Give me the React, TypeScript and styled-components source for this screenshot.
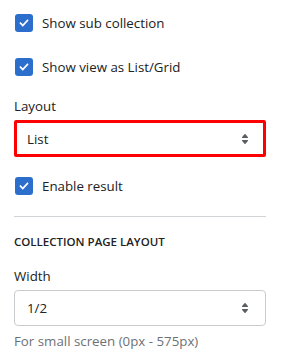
import React from 'react';
import styled, { createGlobalStyle } from 'styled-components';

const Global = createGlobalStyle`
  body {
    margin: 0;
    background: #ffffff;
    font-family: 'Open Sans', 'Noto Sans', sans-serif;
    color: #202223;
  }
`;

const Panel = styled.div`
  width: 252px;
  padding: 14px 0 0 14px;
  display: flex;
  flex-direction: column;
`;

const CheckRow = styled.label<{ top: number }>`
  display: flex;
  align-items: center;
  gap: 9px;
  height: 18px;
  margin-top: ${p => p.top}px;
  padding-left: 1px;
  font-size: 13.3px;
  line-height: 18px;
`;

const Box = styled.span`
  width: 18px;
  height: 18px;
  border-radius: 3px;
  background-color: #2c6ecb;
  display: flex;
  align-items: center;
  justify-content: center;
  flex-shrink: 0;
`;

const Label = styled.div<{ top: number }>`
  margin-top: ${p => p.top}px;
  font-size: 13.3px;
  line-height: 20px;
`;

const SelectBox = styled.div<{ highlighted?: boolean }>`
  margin-top: 4px;
  box-sizing: border-box;
  height: ${p => (p.highlighted ? 37 : 36)}px;
  border: ${p => (p.highlighted ? '3px solid #ff0000' : '1px solid #c9cccf')};
  border-radius: ${p => (p.highlighted ? 2 : 4)}px;
  display: flex;
  align-items: center;
  justify-content: space-between;
  padding: 0 ${p => (p.highlighted ? 8 : 10)}px 0 ${p => (p.highlighted ? 10 : 12)}px;
  font-size: 13.3px;
`;

const Divider = styled.div`
  margin-top: 21px;
  height: 1px;
  background-color: #d2d5d8;
`;

const Heading = styled.div`
  margin-top: 17px;
  font-size: 11.5px;
  line-height: 16px;
  font-weight: 600;
  text-transform: uppercase;
`;

const Help = styled.div`
  margin-top: 5px;
  font-size: 13.3px;
  line-height: 20px;
  color: #6d7175;
`;

function Tick() {
  return (
    <svg width="18" height="18" viewBox="0 0 20 20" fill="#ffffff">
      <path d="m8.315 13.859-3.182-3.417a.506.506 0 0 1 0-.684l.643-.684a.437.437 0 0 1 .642 0l2.22 2.393 4.942-5.327a.437.437 0 0 1 .643 0l.643.684a.504.504 0 0 1 0 .683l-5.91 6.35a.437.437 0 0 1-.642 0" />
    </svg>
  );
}

function Arrows() {
  return (
    <svg width="20" height="20" viewBox="0 0 20 20" fill="#5c5f62">
      <path d="M7.676 9h4.648c.563 0 .879-.603.53-1.014l-2.323-2.746a.708.708 0 0 0-1.062 0l-2.324 2.746c-.347.411-.032 1.014.531 1.014Zm4.648 2h-4.648c-.563 0-.878.603-.53 1.014l2.323 2.746c.27.32.792.32 1.062 0l2.323-2.746c.349-.411.033-1.014-.53-1.014Z" />
    </svg>
  );
}

function Check(props: { label: string; top: number }) {
  return (
    <CheckRow top={props.top}>
      <Box>
        <Tick />
      </Box>
      {props.label}
    </CheckRow>
  );
}

function Select(props: { value: string; highlighted?: boolean }) {
  return (
    <SelectBox highlighted={props.highlighted}>
      <span>{props.value}</span>
      <Arrows />
    </SelectBox>
  );
}

export default function App() {
  return (
    <>
      <Global />
      <Panel>
        <Check label="Show sub collection" top={0} />
        <Check label="Show view as List/Grid" top={26} />
        <Label top={20}>Layout</Label>
        <Select value="List" highlighted />
        <Check label="Enable result" top={20} />
        <Divider />
        <Heading>Collection page layout</Heading>
        <Label top={16}>Width</Label>
        <Select value="1/2" />
        <Help>For small screen (0px - 575px)</Help>
      </Panel>
    </>
  );
}
